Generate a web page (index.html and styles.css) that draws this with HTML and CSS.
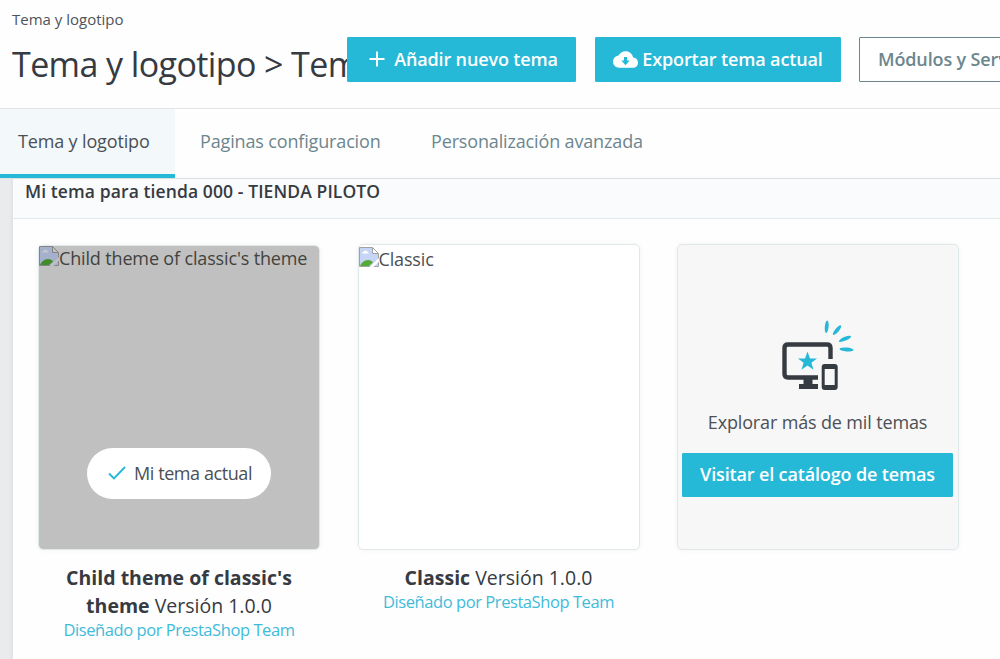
FILE: index.html
```html
<!DOCTYPE html>
<html lang="es">
<head>
  <meta charset="UTF-8">
  <meta name="viewport" content="width=device-width, initial-scale=1.0">
  <title>Tema y logotipo</title>
  <link rel="stylesheet" href="styles.css">
</head>
<body>
  <header class="page-head">
    <div class="breadcrumb">Tema y logotipo</div>
    <div class="head-row">
      <h1 class="title">Tema y logotipo &gt; Tema</h1>
      <div class="toolbar">
        <button class="btn btn-add">
          <svg width="16" height="16" viewBox="0 0 16 16"><path d="M8 .5v15M.5 8h15" stroke="#fff" stroke-width="1.9"/></svg>
          <span>Añadir nuevo tema</span>
        </button>
        <button class="btn btn-export">
          <svg width="25" height="25" viewBox="0 0 24 24"><path fill="#fff" d="M19.35 10.04C18.67 6.59 15.64 4 12 4 9.11 4 6.6 5.64 5.35 8.04 2.34 8.36 0 10.91 0 14c0 3.31 2.69 6 6 6h13c2.76 0 5-2.24 5-5 0-2.64-2.05-4.78-4.65-4.96zM16 13l-4 4.500-4-4.500h2.500V9.500h3V13z"/></svg>
          <span>Exportar tema actual</span>
        </button>
        <button class="btn btn-outline"><span>Módulos y Servicios</span></button>
      </div>
    </div>
  </header>

  <nav class="tabs">
    <a class="tab tab-current">Tema y logotipo</a>
    <a class="tab tab-pages">Paginas configuracion</a>
    <a class="tab">Personalización avanzada</a>
  </nav>

  <main class="content">
    <section class="panel">
      <h2 class="panel-title">Mi tema para tienda 000 - TIENDA PILOTO</h2>
      <div class="themes">
        <article class="theme">
          <div class="thumb thumb-active">
            <div class="missing">
              <svg width="20" height="20" viewBox="0 0 20 20">
                <path d="M.5.5h13l6 6v13H.5z" fill="#a5b1cc" stroke="#858585"/>
                <path d="M3 6.500c0-1.500 2-1.500 2.500-2.500 1.500-1 3 0 3 1.200 1.200 0 1.200 1.300 1.200 1.300z" fill="#c4c8ce"/>
                <path d="M1 19c1-3 4.500-6 8-6 2.500 0 4 1 5 2.500l-4 3.500z" fill="#418b29"/>
                <path d="M10.500 20L20 11v3.500L14.500 20z" fill="#c0c0c0"/>
                <path d="M13.500.5v6h6z" fill="#c0c0c0" stroke="#858585"/>
              </svg>
              <span>Child theme of classic's theme</span>
            </div>
            <div class="badge">
              <svg width="18" height="14" viewBox="0 0 18 14"><path d="M1 7.500l5 5L17 1" fill="none" stroke="#25b9d7" stroke-width="1.900"/></svg>
              <span>Mi tema actual</span>
            </div>
          </div>
          <div class="name"><strong>Child theme of classic's theme</strong> Versión 1.0.0</div>
          <a class="author">Diseñado por PrestaShop Team</a>
        </article>

        <article class="theme">
          <div class="thumb">
            <div class="missing">
              <svg width="20" height="20" viewBox="0 0 20 20">
                <path d="M.5.5h13l6 6v13H.5z" fill="#c6d5f5" stroke="#a2a2a2"/>
                <path d="M3 6.500c0-1.500 2-1.500 2.500-2.500 1.500-1 3 0 3 1.200 1.200 0 1.200 1.300 1.200 1.300z" fill="#fff"/>
                <path d="M1 19c1-3 4.500-6 8-6 2.500 0 4 1 5 2.500l-4 3.500z" fill="#56aa36"/>
                <path d="M10.500 20L20 11v3.500L14.500 20z" fill="#fff"/>
                <path d="M13.500.5v6h6z" fill="#fff" stroke="#a2a2a2"/>
              </svg>
              <span>Classic</span>
            </div>
          </div>
          <div class="name"><strong>Classic</strong> Versión 1.0.0</div>
          <a class="author">Diseñado por PrestaShop Team</a>
        </article>

        <article class="theme">
          <div class="thumb thumb-catalog">
            <svg width="74" height="72" viewBox="0 0 74 72">
              <g fill="none" stroke="#363a41">
                <path d="M49.500 39V28q0-3.500-3.500-3.500H7Q3.500 24.500 3.500 28v26q0 3.500 3.500 3.500h30" stroke-width="4.400"/>
                <rect x="42.200" y="45.500" width="13" height="23" rx="1.500" stroke-width="3"/>
              </g>
              <path d="M22.500 58h9v6h5.500v5H18v-5h4.500zM42.500 45h12.500v4H42.500zM42.500 65h12.500v4H42.500z" fill="#363a41"/>
              <path d="M26.500 31.500l2.500 7h7l-5.600 4.300 2.100 7-6-4.300-6 4.300 2.100-7-5.600-4.300h7z" fill="#25b9d7"/>
              <g fill="#25b9d7">
                <ellipse cx="45.700" cy="6.700" rx="1.900" ry="6.300" transform="rotate(5 45.700 6.700)"/>
                <ellipse cx="56" cy="10.200" rx="1.900" ry="6.100" transform="rotate(40 56 10.200)"/>
                <ellipse cx="64" cy="18.800" rx="1.900" ry="6.600" transform="rotate(67 64 18.800)"/>
                <ellipse cx="65.500" cy="29.500" rx="1.900" ry="7" transform="rotate(94 65.500 29.500)"/>
              </g>
            </svg>
            <p class="explore">Explorar más de mil temas</p>
            <button class="btn btn-catalog"><span>Visitar el catálogo de temas</span></button>
          </div>
        </article>
      </div>
    </section>
  </main>
</body>
</html>
```
FILE: styles.css
```css
* { margin: 0; padding: 0; box-sizing: border-box; }
body {
  font-family: 'Open Sans', Arial, sans-serif;
  font-size: 18px;
  letter-spacing: -0.15px;
  color: #363a41;
  background-color: #eaebec;
  height: 100vh;
  overflow: hidden;
}
svg { flex: none; display: block; }
.page-head {
  height: 109px;
  background-color: #fefefe;
  border-bottom: 1px solid #e4e4e4;
  overflow: hidden;
}
.breadcrumb {
  padding: 9px 12px 0;
  height: 37px;
  font-size: 15px;
  letter-spacing: 0;
  line-height: 21px;
  color: #4e5459;
}
.head-row { display: flex; height: 45px; }
.title {
  flex: none;
  width: 347px;
  padding-left: 12px;
  font-size: 34px;
  font-weight: 400;
  letter-spacing: -0.6px;
  line-height: 54px;
  height: 60px;
  white-space: nowrap;
  overflow: hidden;
}
.toolbar { display: flex; flex: none; gap: 19px; }
.btn {
  display: flex;
  align-items: center;
  justify-content: center;
  flex: none;
  height: 45px;
  padding-bottom: 1px;
  border: 1px solid #25b9d7;
  border-radius: 1px;
  background-color: #25b9d7;
  color: #fff;
  font-family: inherit;
  font-size: 18px;
  font-weight: 600;
  letter-spacing: -0.14px;
  white-space: nowrap;
}
.btn-add { width: 229px; gap: 9px; padding-left: 4px; }
.btn-export { width: 246px; gap: 4px; }
.btn-outline {
  width: 210px;
  margin-left: -1px;
  justify-content: flex-start;
  padding-left: 18px;
  background-color: #fff;
  border-color: #6c868e;
  color: #6c868e;
}
.tabs {
  display: flex;
  height: 70px;
  background-color: #fefefe;
  border-bottom: 1px solid #e2e5e7;
}
.tab {
  padding: 0 25px;
  line-height: 64px;
  color: #6c868e;
  white-space: nowrap;
}
.tab-current {
  width: 175px;
  padding-left: 18px;
  background-color: #f3f8fb;
  border-bottom: 4px solid #25b9d7;
  color: #4a5055;
}
.tab-pages { width: 231px; }
.content { padding-left: 12px; height: 480px; }
.panel {
  height: 100%;
  background-color: #fefefe;
  border-left: 1px solid #dfe5e7;
  box-shadow: 0 0 4px rgba(0, 0, 0, 0.06);
}
.panel-title {
  height: 40px;
  padding-left: 12px;
  background-color: #fafbfc;
  border-bottom: 1px solid #dfe8eb;
  font-size: 17.5px;
  font-weight: 600;
  letter-spacing: 0.1px;
  line-height: 24px;
}
.themes { display: flex; gap: 37.5px; padding: 25px 25px 0; }
.theme { width: 282px; flex: none; text-align: center; }
.thumb {
  height: 306px;
  padding: 1px 1px 1px 0;
  border: 1px solid #e1e8eb;
  border-radius: 5px;
  background-color: #fff;
  box-shadow: 0 0 5px rgba(0, 0, 0, 0.05);
}
.thumb-active {
  display: flex;
  flex-direction: column;
  justify-content: space-between;
  align-items: center;
  height: 305px;
  margin-top: 1px;
  padding: 0 0 50px;
  background-color: #c0c0c0;
  background-clip: padding-box;
}
.missing {
  display: flex;
  width: 100%;
  padding-top: 1px;
  line-height: 24px;
  color: #4a5055;
  white-space: nowrap;
}
.thumb-active .missing { padding-top: 0; color: #41433f; }
.badge {
  display: flex;
  align-items: center;
  justify-content: center;
  gap: 8px;
  width: 184px;
  height: 51px;
  padding: 0 0 2px 2px;
  border-radius: 26px;
  background-color: #fff;
  color: #4a5055;
  letter-spacing: -0.42px;
}
.thumb-catalog {
  display: flex;
  flex-direction: column;
  align-items: center;
  padding-top: 75px;
  background-color: #f7f7f7;
}
.explore { margin-top: 18px; line-height: 24px; color: #4a5055; }
.btn-catalog { width: 271px; height: 44px; margin-top: 19px; padding-bottom: 2px; }
.name { padding: 14px 20px 0; font-size: 19.5px; letter-spacing: 0; line-height: 28px; }
.author { display: block; font-size: 16.5px; letter-spacing: -0.43px; line-height: 20px; color: #40bbda; }
```
